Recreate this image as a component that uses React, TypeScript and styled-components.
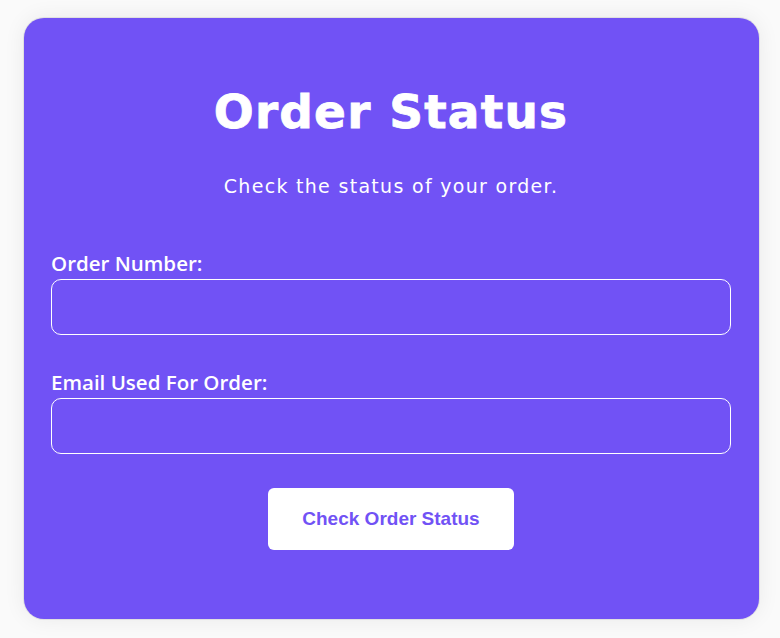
import * as React from 'react';
import styled, { createGlobalStyle } from 'styled-components';

const GlobalStyle = createGlobalStyle`
  html, body {
    margin: 0;
    padding: 0;
    background: #fafafa;
  }
`;

const Page = styled.div`
  padding: 18px 21px 19px 24px;
`;

const Card = styled.form`
  box-sizing: border-box;
  width: 735px;
  height: 601px;
  padding: 64px 28px 0 27px;
  display: flex;
  flex-direction: column;
  background: #7152f5;
  border-radius: 20px;
  box-shadow: 0 0 0 1px rgba(0, 0, 0, 0.07), 0 0 22px rgba(0, 0, 0, 0.07);
  color: #fff;
`;

const Title = styled.h1`
  margin: 0;
  font-family: 'DejaVu Sans', Inter, sans-serif;
  font-weight: 700;
  font-size: 47px;
  line-height: 60px;
  letter-spacing: 1.2px;
  text-align: center;
  -webkit-text-stroke: 0.8px #fff;
`;

const Subtitle = styled.p`
  margin: 29px 0 0;
  font-family: 'DejaVu Sans', Inter, sans-serif;
  font-weight: 400;
  font-size: 19px;
  line-height: 30px;
  letter-spacing: 1.3px;
  text-align: center;
`;

const Field = styled.div<{ $top: number }>`
  display: flex;
  flex-direction: column;
  gap: 4px;
  margin-top: ${(p) => p.$top}px;
`;

const Label = styled.label`
  font-family: 'Open Sans', Lato, sans-serif;
  font-weight: 600;
  font-size: 20.5px;
  line-height: 24px;
`;

const Input = styled.input`
  box-sizing: border-box;
  width: 100%;
  height: 56px;
  padding: 0 14px;
  border: 1px solid #fff;
  border-radius: 10px;
  background: transparent;
  color: #fff;
  font-size: 18px;
  outline: none;
`;

const Button = styled.button`
  align-self: center;
  width: 246px;
  height: 62px;
  margin-top: 34px;
  border: none;
  border-radius: 6px;
  background: #fff;
  color: #7152f5;
  font-family: 'Liberation Sans', Arial, sans-serif;
  font-weight: 700;
  font-size: 19px;
  cursor: pointer;
`;

export default function App() {
  return (
    <Page>
      <GlobalStyle />
      <Card onSubmit={(e) => e.preventDefault()}>
        <Title>Order Status</Title>
        <Subtitle>Check the status of your order.</Subtitle>
        <Field $top={50}>
          <Label htmlFor="order-number">Order Number:</Label>
          <Input id="order-number" type="text" />
        </Field>
        <Field $top={35}>
          <Label htmlFor="order-email">Email Used For Order:</Label>
          <Input id="order-email" type="email" />
        </Field>
        <Button type="submit">Check Order Status</Button>
      </Card>
    </Page>
  );
}
